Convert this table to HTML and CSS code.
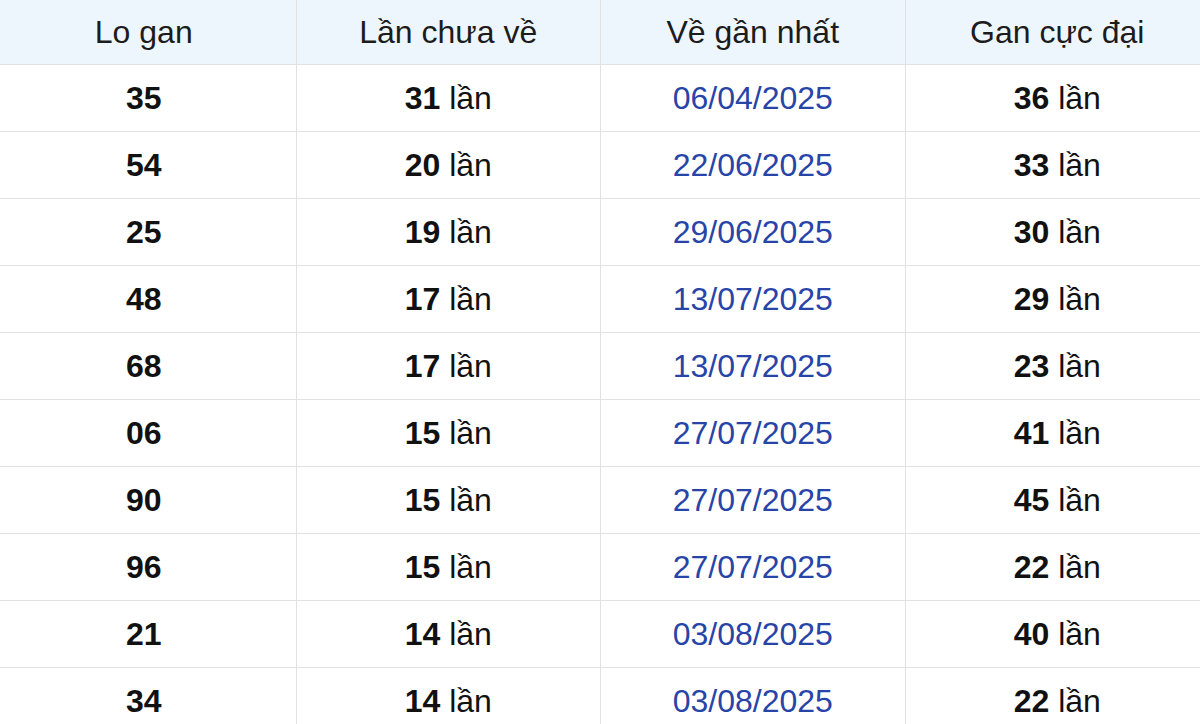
FILE: index.html
```html
<!DOCTYPE html>
<html lang="vi">
<head>
<meta charset="utf-8">
<title>Lo gan</title>
<link rel="stylesheet" href="styles.css">
</head>
<body>
<table class="gan-table">
  <thead>
    <tr><th>Lo gan</th><th>Lần chưa về</th><th>Về gần nhất</th><th>Gan cực đại</th></tr>
  </thead>
  <tbody>
    <tr><td><b>35</b></td><td><b>31</b> lần</td><td class="date">06/04/2025</td><td><b>36</b> lần</td></tr>
    <tr><td><b>54</b></td><td><b>20</b> lần</td><td class="date">22/06/2025</td><td><b>33</b> lần</td></tr>
    <tr><td><b>25</b></td><td><b>19</b> lần</td><td class="date">29/06/2025</td><td><b>30</b> lần</td></tr>
    <tr><td><b>48</b></td><td><b>17</b> lần</td><td class="date">13/07/2025</td><td><b>29</b> lần</td></tr>
    <tr><td><b>68</b></td><td><b>17</b> lần</td><td class="date">13/07/2025</td><td><b>23</b> lần</td></tr>
    <tr><td><b>06</b></td><td><b>15</b> lần</td><td class="date">27/07/2025</td><td><b>41</b> lần</td></tr>
    <tr><td><b>90</b></td><td><b>15</b> lần</td><td class="date">27/07/2025</td><td><b>45</b> lần</td></tr>
    <tr><td><b>96</b></td><td><b>15</b> lần</td><td class="date">27/07/2025</td><td><b>22</b> lần</td></tr>
    <tr><td><b>21</b></td><td><b>14</b> lần</td><td class="date">03/08/2025</td><td><b>40</b> lần</td></tr>
    <tr><td><b>34</b></td><td><b>14</b> lần</td><td class="date">03/08/2025</td><td><b>22</b> lần</td></tr>
  </tbody>
</table>
</body>
</html>
```

FILE: styles.css
```css
html, body {
  margin: 0;
  padding: 0;
  background: #ffffff;
  overflow: hidden;
}
body {
  font-family: "Liberation Sans", Arial, sans-serif;
  color: #111111;
}
.gan-table {
  border-collapse: collapse;
  table-layout: fixed;
  width: 1219px;
  margin-left: -9px;
  font-size: 32px;
}
.gan-table th,
.gan-table td {
  border: 1px solid #e2e2e2;
  text-align: center;
  vertical-align: middle;
  padding: 0;
}
.gan-table th {
  background: #eef6fd;
  font-weight: normal;
  color: #1c1c1c;
  height: 64px;
  border-top: none;
}
.gan-table td {
  height: 66px;
}
.gan-table b {
  font-weight: bold;
}
.gan-table td.date {
  color: #2744a8;
}
```
